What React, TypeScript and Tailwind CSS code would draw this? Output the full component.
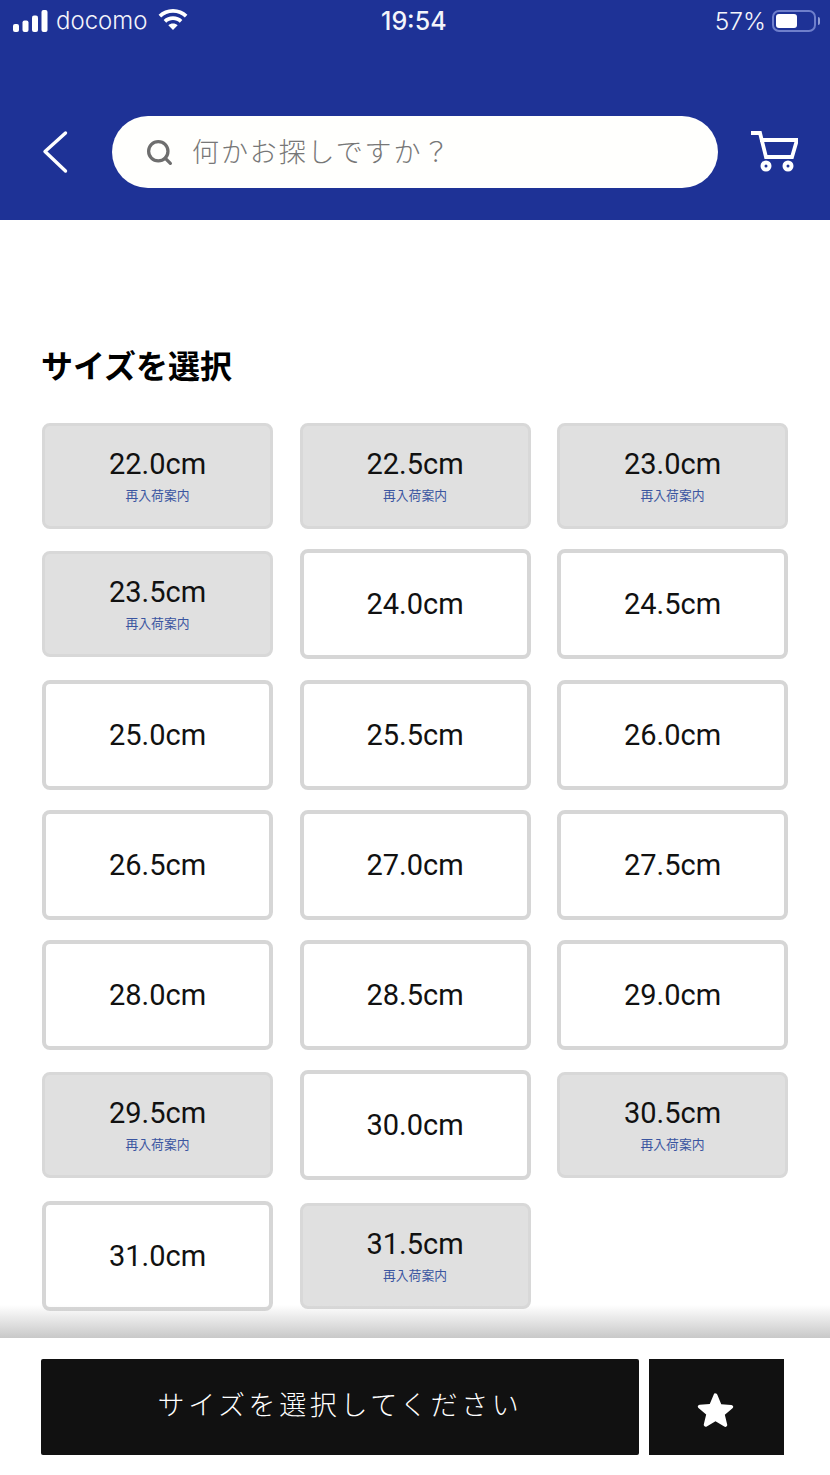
import { Search } from "lucide-react";

const SIZES: { label: string; soldOut?: boolean }[] = [
  { label: "22.0cm", soldOut: true },
  { label: "22.5cm", soldOut: true },
  { label: "23.0cm", soldOut: true },
  { label: "23.5cm", soldOut: true },
  { label: "24.0cm" },
  { label: "24.5cm" },
  { label: "25.0cm" },
  { label: "25.5cm" },
  { label: "26.0cm" },
  { label: "26.5cm" },
  { label: "27.0cm" },
  { label: "27.5cm" },
  { label: "28.0cm" },
  { label: "28.5cm" },
  { label: "29.0cm" },
  { label: "29.5cm", soldOut: true },
  { label: "30.0cm" },
  { label: "30.5cm", soldOut: true },
  { label: "31.0cm" },
  { label: "31.5cm", soldOut: true },
];

const CJK = "font-['Noto_Sans_CJK_JP','Noto_Sans',sans-serif]";

function StatusBar() {
  return (
    <div className="relative flex h-[42px] items-center justify-between pl-[13px] pr-[10px] text-[#f4f5fb]">
      <div className="flex items-center">
        <svg width="35" height="22" viewBox="0 0 35 22" fill="#fff">
          <rect x="0" y="14" width="6" height="8" rx="2" />
          <rect x="9.5" y="10.5" width="6" height="11.5" rx="2" />
          <rect x="19" y="5.5" width="6" height="16.5" rx="2" />
          <rect x="28.5" y="0" width="6" height="22" rx="2" />
        </svg>
        <span className="ml-[8px] font-['Inter',sans-serif] text-[24px] font-light">docomo</span>
        <svg className="ml-[10px] mb-[4px]" width="30" height="21" viewBox="0 0 31 22" fill="#fff">
          <path d="M15.5 0C9.6 0 4.3 2.2.4 5.9l2.7 2.9C6.3 5.7 10.7 3.9 15.5 3.9s9.2 1.8 12.4 4.9l2.7-2.9C26.7 2.2 21.4 0 15.5 0z" />
          <path d="M15.5 7.6c-3.8 0-7.2 1.4-9.8 3.8l2.7 2.9c1.9-1.7 4.4-2.8 7.1-2.8s5.2 1.1 7.1 2.8l2.7-2.9c-2.6-2.4-6-3.8-9.8-3.8z" />
          <path d="M15.5 15.2c-1.9 0-3.6.7-4.9 1.9l4.9 4.9 4.9-4.9c-1.3-1.2-3-1.9-4.9-1.9z" />
        </svg>
      </div>
      <span className="absolute left-[381px] font-['Inter',sans-serif] text-[25px] font-medium leading-none">19:54</span>
      <div className="flex items-center">
        <span className="font-['Inter',sans-serif] text-[24.5px] font-light">57%</span>
        <div className="ml-[6px] flex h-[22px] w-[44px] items-center rounded-[7px] border-2 border-[#6f7fcb] p-[2px]">
          <div className="h-full w-[21px] rounded-[3px] bg-white" />
        </div>
        <div className="ml-[2px] h-[8px] w-[2px] rounded-r-full bg-[#8f9bd6]" />
      </div>
    </div>
  );
}

function SizeCell({ label, soldOut }: { label: string; soldOut?: boolean }) {
  const number = "font-['Roboto',sans-serif] text-[29px] leading-[34px] text-[#111]";
  if (soldOut) {
    return (
      <div className="flex h-[106px] w-full flex-col items-center rounded-[8px] border-[3px] border-[#d8d8d8] bg-[#e0e0e0] pt-[21px]">
        <span className={number}>{label}</span>
        <span className={`${CJK} mt-[5px] text-[12.8px] leading-[18px] text-[#3a55a0]`}>再入荷案内</span>
      </div>
    );
  }
  return (
    <div className="flex h-[110px] w-full items-center justify-center rounded-[8px] border-[4px] border-[#d6d6d6] bg-white">
      <span className={number}>{label}</span>
    </div>
  );
}

export default function App() {
  return (
    <div className="relative flex h-[1475px] w-[830px] flex-col overflow-hidden bg-white">
      <header className="h-[220px] shrink-0 bg-[#1e3296]">
        <StatusBar />
        <div className="mt-[74px] flex items-center">
          <svg className="ml-[42px]" width="26" height="44" viewBox="0 0 26 44" fill="none" stroke="#fff" strokeWidth="3.4" strokeLinecap="round" strokeLinejoin="round">
            <path d="M23.5 3 3 21.5 23.5 41" />
          </svg>
          <div className="ml-[44px] flex h-[72px] w-[606px] items-center rounded-full bg-[#fffffd] pl-[33px]">
            <Search className="text-[#6e6e6e]" size={29} strokeWidth={2.7} />
            <span className={`${CJK} ml-[18px] mb-[2px] text-[27px] font-light tracking-[1.9px] text-[#777]`}>何かお探しですか？</span>
          </div>
          <svg className="ml-[32px]" width="48" height="44" viewBox="0 0 48 44" fill="none" stroke="#fff" strokeWidth="3.8">
            <path d="M1 3h9l6 24h26l5-17H10" strokeLinejoin="miter" />
            <circle cx="16" cy="36" r="3.5" strokeWidth="4" />
            <circle cx="38" cy="36" r="3.5" strokeWidth="4" />
          </svg>
        </div>
      </header>

      <main className="flex-1 px-[42px] pt-[121px]">
        <h1 className={`${CJK} -ml-[1px] text-[32px] font-bold leading-[46px] text-black`}>サイズを選択</h1>
        <div className="mt-[36px] grid w-[746px] grid-cols-3 items-center gap-x-[26.5px] gap-y-[20.3px]">
          {SIZES.map((size) => (
            <SizeCell key={size.label} label={size.label} soldOut={size.soldOut} />
          ))}
        </div>
      </main>

      <div className="pointer-events-none absolute inset-x-0 top-[1305px] h-[33px] bg-gradient-to-b from-white/0 to-[#c8c8c8]" />

      <footer className="absolute inset-x-0 top-[1338px] flex h-[137px] items-start gap-[10px] bg-white pl-[41px] pt-[21px]">
        <button className={`${CJK} flex h-[96px] w-[598px] items-center justify-center rounded-[2px] bg-[#111] pb-[6px] text-[27px] font-light tracking-[3.6px] text-white`}>
          サイズを選択してください
        </button>
        <button className="flex h-[96px] w-[135px] items-center justify-center bg-[#111] pr-[2px]">
          <svg width="37" height="35" viewBox="0 0 38 36" fill="#fff" className="mt-[4px]">
            <path d="M19 1.5c.9 0 1.5.5 1.9 1.4l4 9.6 10.3.8c2 .2 2.7 2.2 1.3 3.4l-7.9 6.7 2.4 10c.5 1.9-1.4 3.2-3 2.2L19 30l-9 5.4c-1.6 1-3.5-.3-3-2.2l2.4-10-7.9-6.7c-1.4-1.2-.7-3.2 1.3-3.4l10.3-.8 4-9.6c.4-.9 1-1.4 1.9-1.4z" />
          </svg>
        </button>
      </footer>
    </div>
  );
}
